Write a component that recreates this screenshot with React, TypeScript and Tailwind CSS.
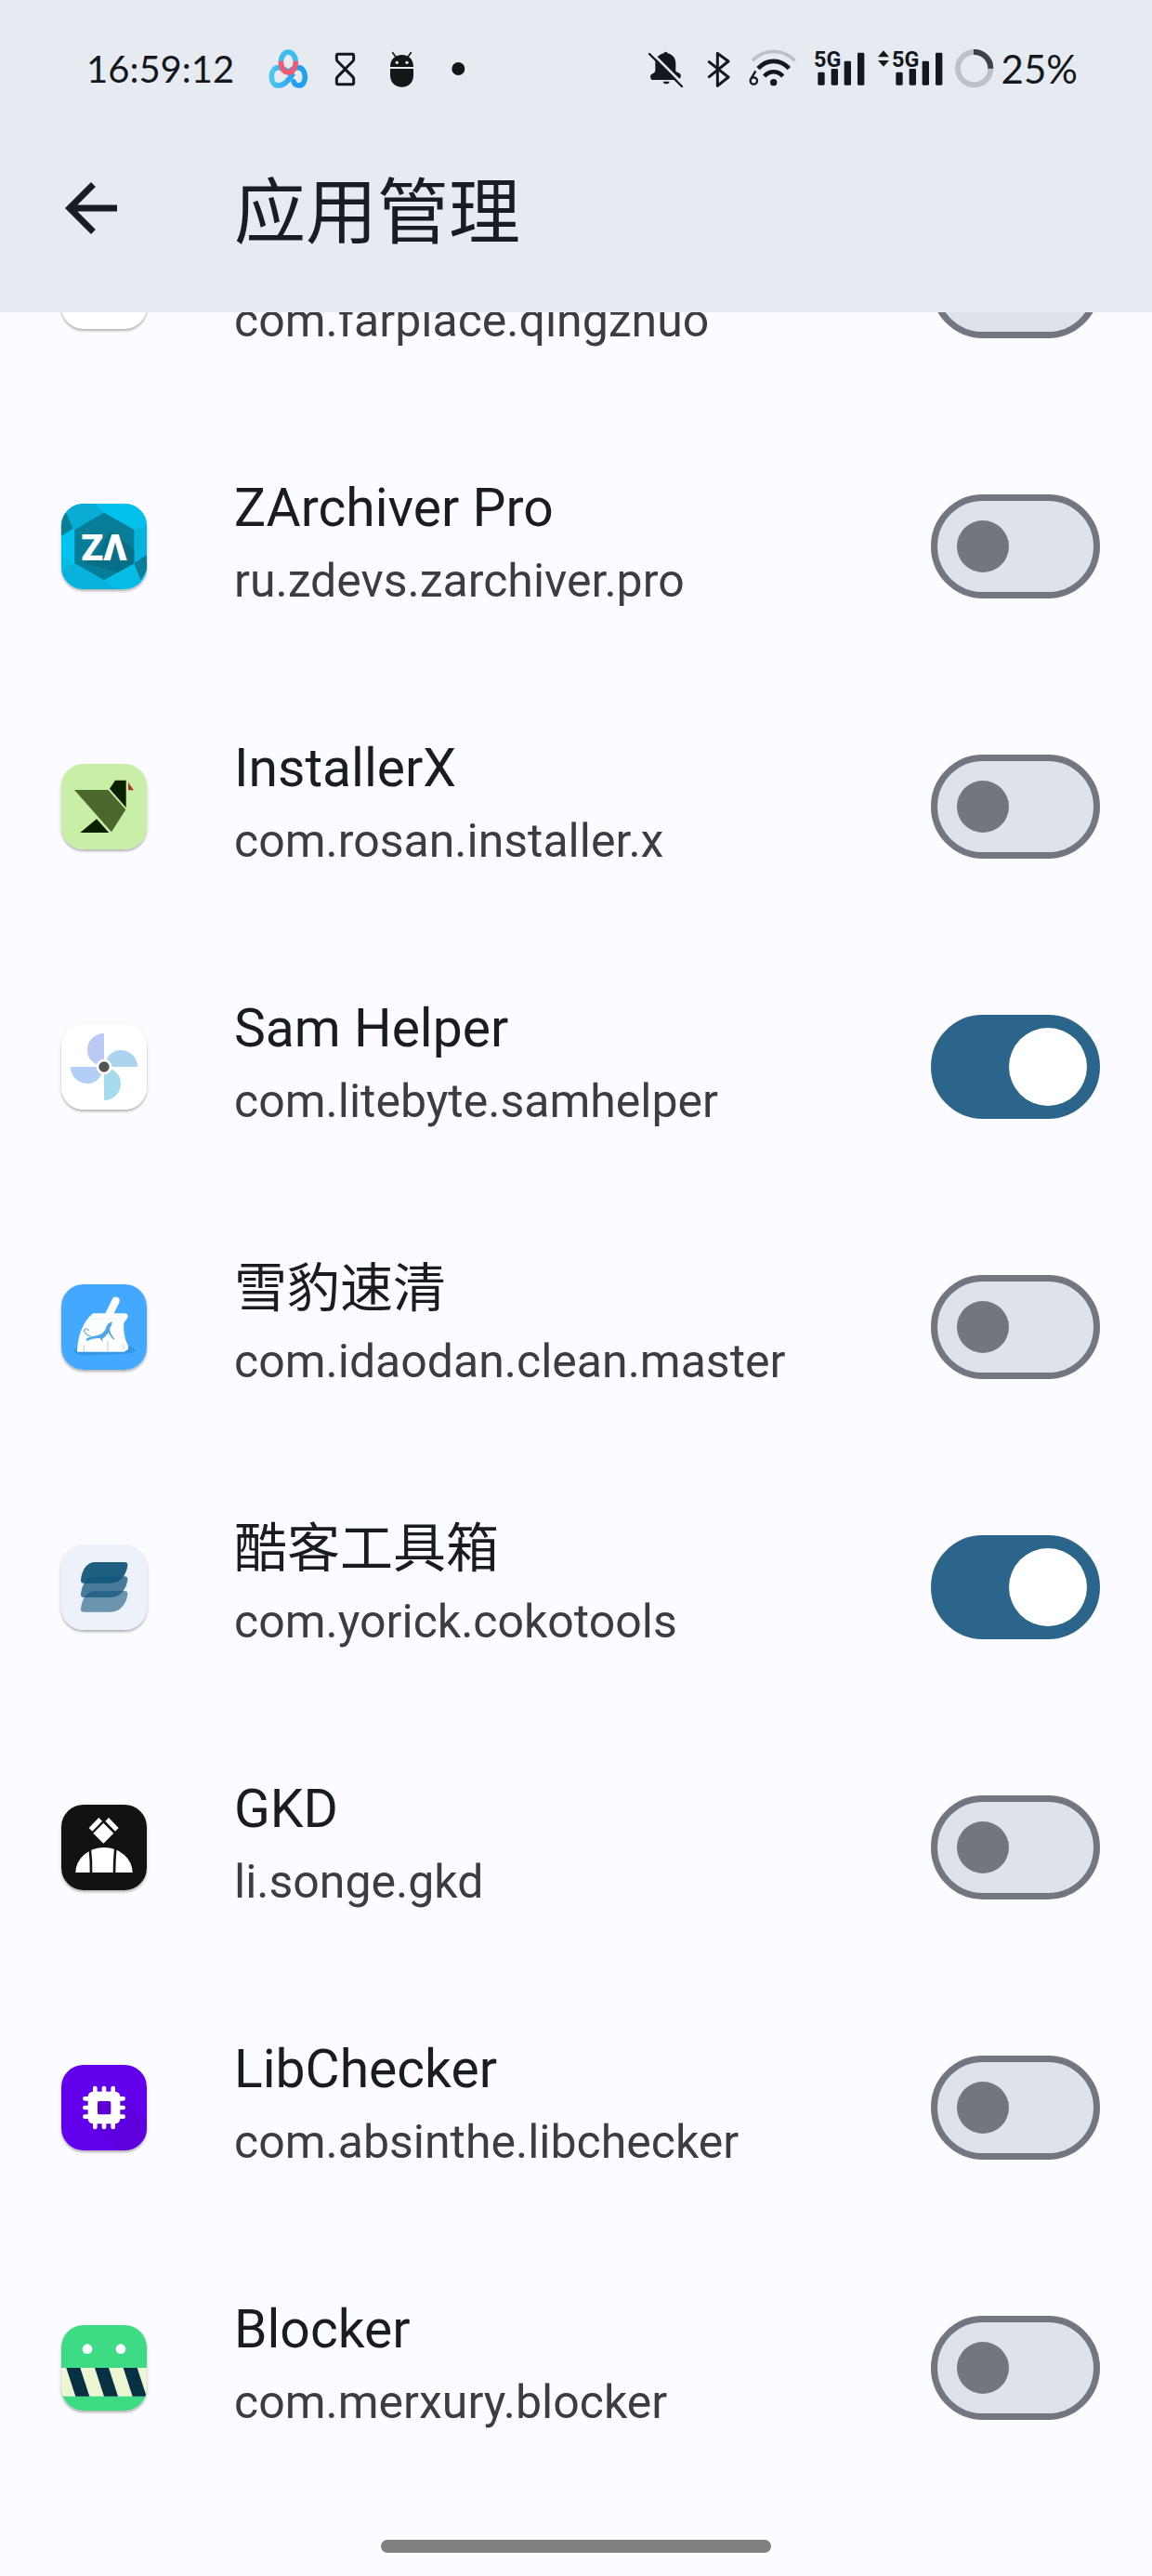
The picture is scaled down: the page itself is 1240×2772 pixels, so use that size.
import { useState } from 'react';
import type { ReactNode } from 'react';

function CloudDiskIcon() {
  return (
    <svg viewBox="684 60 135 144" className="h-12 w-[45px]" fill="none" aria-hidden="true">
      <defs>
        <linearGradient id="loopTop" x1="0" y1="0" x2="0" y2="1">
          <stop offset="0.4" stopColor="#3dbdec" />
          <stop offset="0.48" stopColor="#ef5b74" />
        </linearGradient>
        <linearGradient id="loopLeft" x1="0" y1="0" x2="1" y2="0">
          <stop offset="0" stopColor="#4cc6ee" />
          <stop offset="1" stopColor="#2aa0ee" />
        </linearGradient>
      </defs>
      <path d="M768 146C754 162 743 186 718 186C704 186 697 172 697 158C697 141 706 128 720 128C731 128 738 134 751 143" stroke="url(#loopLeft)" strokeWidth="17" />
      <path d="M751 143C764 134 770 128 782 128C797 128 805 143 805 158C805 174 797 186 786 186C776 186 770 181 768 173" stroke="#22a0ef" strokeWidth="17" strokeLinecap="round" />
      <ellipse cx="751" cy="111" rx="24" ry="33" stroke="url(#loopTop)" strokeWidth="17" />
    </svg>
  );
}

function HourglassIcon() {
  return (
    <svg viewBox="867 60 135 144" className="h-12 w-[45px]" fill="none" stroke="#14171d" strokeWidth="9" strokeLinejoin="round" aria-hidden="true">
      <path d="M911 85H958Q962 85 962 90V101Q962 105 959 108L938 129Q935 133 938 137L959 158Q962 161 962 165V177Q962 182 958 182H911Q907 182 907 177V165Q907 161 910 158L931 137Q934 133 931 129L910 108Q907 105 907 101V90Q907 85 911 85Z" />
    </svg>
  );
}

function RobotIcon() {
  return (
    <svg viewBox="1050 60 135 144" className="h-12 w-[45px]" fill="#14171a" aria-hidden="true">
      <path d="M1080 126C1080 102 1096 87 1118 87C1140 87 1155 102 1155 126Z" />
      <path d="M1080 132H1155V153C1155 177 1139 191 1118 191C1096 191 1080 177 1080 153Z" />
      <path d="M1088 80L1098 94M1147 80L1137 94" stroke="#14171a" strokeWidth="5" strokeLinecap="round" />
      <circle cx="1102" cy="112" r="5" fill="#e6ebf2" />
      <circle cx="1134" cy="112" r="5" fill="#e6ebf2" />
    </svg>
  );
}

function DotIcon() {
  return (
    <svg viewBox="1232 60 135 144" className="h-12 w-[45px]" aria-hidden="true">
      <circle cx="1299" cy="132" r="21" fill="#14171a" />
    </svg>
  );
}

function MutedBellIcon() {
  return (
    <svg viewBox="36 60 144 144" className="size-12" fill="#14171d" aria-hidden="true">
      <path d="M104 82Q104 77 110 77Q115 77 115 82C132 86 142 98 142 114V140L156 148Q160 153 158 160L150 168H66Q60 166 60 157Q60 150 68 148Q76 144 76 138V114C76 98 87 86 104 82Z" />
      <path d="M101 173H122Q120 181 111 181Q103 181 101 173Z" />
      <path d="M64 80L170 186" stroke="#e6ebf2" strokeWidth="8" />
      <path d="M57 84L162 189" stroke="#14171d" strokeWidth="7" strokeLinecap="round" />
    </svg>
  );
}

function BluetoothIcon() {
  return (
    <svg viewBox="216 60 126 144" className="h-12 w-[42px]" fill="none" stroke="#14171d" strokeWidth="9" strokeLinejoin="round" strokeLinecap="round" aria-hidden="true">
      <path d="M250 110L312 159L277 187V82L312 108L250 158" />
    </svg>
  );
}

function WifiIcon() {
  return (
    <svg viewBox="378 60 168 144" className="h-12 w-14" fill="none" aria-hidden="true">
      <path d="M389 106C428 66 488 66 527 106" stroke="#bcc1c9" strokeWidth="11" />
      <path d="M408 131C437 100 480 100 508 131" stroke="#14171d" strokeWidth="14" />
      <path d="M428 156C446 137 470 137 488 156" stroke="#14171d" strokeWidth="14" />
      <circle cx="458" cy="176" r="11" fill="#14171d" />
      <path d="M400 139L386 163" stroke="#14171d" strokeWidth="7" />
      <circle cx="394" cy="171" r="11" stroke="#14171d" strokeWidth="7" />
    </svg>
  );
}

function Bars({ x }: { x: number }) {
  return (
    <g fill="#14171d">
      <text x={x - 13} y="125" fontSize="70" fontWeight="700" fontFamily="Roboto, sans-serif">5G</text>
      <rect x={x} y="143" width="22" height="42" rx="4" />
      <rect x={x + 43} y="132" width="22" height="53" rx="4" />
      <rect x={x + 85} y="107" width="22" height="78" rx="4" />
      <rect x={x + 128} y="80" width="22" height="105" rx="4" />
    </g>
  );
}

function SignalIcon() {
  return (
    <svg viewBox="582 60 174 144" className="h-12 w-[58px]" role="img" aria-label="5G">
      <Bars x={601} />
    </svg>
  );
}

function ActiveSignalIcon() {
  return (
    <svg viewBox="792 60 216 144" className="h-12 w-[72px]" role="img" aria-label="5G">
      <path d="M813 73L831 94H795ZM795 105H831L813 125Z" fill="#14171d" />
      <Bars x={853} />
    </svg>
  );
}

function BatteryRing() {
  return (
    <svg viewBox="1044 60 126 144" className="h-12 w-[42px]" fill="none" strokeWidth="18" aria-hidden="true">
      <circle cx="1106" cy="131" r="53" stroke="#bcc1ca" />
      <path d="M1104 78A53 53 0 0 1 1159 131" stroke="#3d4148" />
    </svg>
  );
}

function ArchiverLogo() {
  return (
    <svg viewBox="0 0 276 276" className="size-full" aria-hidden="true">
      <rect width="276" height="276" fill="#04bce6" />
      <path d="M0 0H110L138 29L43 84L14 30Z" fill="#08acd5" />
      <path d="M110 0H276V76L235 84L138 29Z" fill="#04c0ec" />
      <path d="M276 76V165L235 193V84Z" fill="#06b4dd" />
      <path d="M14 28L38 80L0 104V50Z" fill="#087e99" />
      <path d="M276 165V215L256 247L235 193Z" fill="#087e99" />
      <path d="M0 104L43 84V193L0 168Z" fill="#04c4ef" />
      <path d="M0 215L43 193L180 276H0Z" fill="#08b2db" />
      <path d="M138 29L235 84V193L138 247L43 193V84Z" fill="#087d98" />
      <path d="M160 86L235 150V193L184 221L76 194L120 150Z" fill="#076f87" />
      <text x="138" y="182" textAnchor="middle" fill="#fff" fontFamily="Roboto, sans-serif" fontWeight="900" fontSize="118">ZΛ</text>
    </svg>
  );
}

function BirdLogo() {
  return (
    <svg viewBox="48 66 276 276" className="size-full" aria-hidden="true">
      <rect x="48" y="66" width="276" height="276" fill="#c9eea6" />
      <path d="M90 150H199L256 214L210 286Z" fill="#4a672e" />
      <path d="M222 119H257V207L204 146Z" fill="#0b2000" />
      <path d="M162 244L202 288H109Z" fill="#0b2000" />
      <path d="M264 126L282 151H264Z" fill="#a5391c" />
    </svg>
  );
}

const BLADE = 'M186 204V100Q186 95 180 96C150 100 132 124 132 150C132 172 144 188 166 198Z';

function FanLogo() {
  return (
    <svg viewBox="48 66 276 276" className="size-full" aria-hidden="true">
      <rect x="48" y="66" width="276" height="276" fill="#fff" />
      <path d={BLADE} fill="#bbc9f5" />
      <path d={BLADE} fill="#abd4f1" transform="rotate(90 186 204)" />
      <path d={BLADE} fill="#a6daed" transform="rotate(180 186 204)" />
      <path d={BLADE} fill="#b3cff7" transform="rotate(270 186 204)" />
      <circle cx="186" cy="204" r="25" fill="#fff" />
      <circle cx="186" cy="204" r="17" fill="#545355" />
    </svg>
  );
}

function BroomLogo() {
  return (
    <svg viewBox="48 66 276 276" className="size-full" aria-hidden="true">
      <rect x="48" y="66" width="276" height="276" fill="#42a9fe" />
      <path d="M90 284Q92 268 108 268L262 264Q290 272 286 282Q282 290 262 290L130 296Q96 296 90 284Z" fill="#3597e6" />
      <path d="M224 119L202 164" stroke="#fff" strokeWidth="25" strokeLinecap="round" />
      <path d="M150 160H254Q266 162 262 174Q256 184 251 188C246 216 254 244 264 264V276L250 284H99C100 246 112 190 150 160Z" fill="#fdfeff" />
      <path d="M140 178H250" stroke="#f3e9e6" strokeWidth="2" />
      <path d="M121 262V284M198 250V286M246 262L252 276" stroke="#bfcbd6" strokeWidth="3" />
      <path d="M131 240C150 228 176 238 190 212Q196 190 212 187Q212 200 205 206C204 222 212 234 222 244Q214 248 200 222Q186 242 180 240L182 252L172 240Q152 238 132 248L128 248Z" fill="#4fa6e8" />
      <path d="M142 233C130 232 124 222 121 216Q124 206 136 214" fill="none" stroke="#7fb0d6" strokeWidth="4" strokeLinecap="round" />
    </svg>
  );
}

const LEAF = 'M154 123H252Q263 123 262 134C258 164 238 191 206 191H121Q110 191 111 180C114 150 130 124 154 123Z';

function LayersLogo() {
  return (
    <svg viewBox="48 66 276 276" className="size-full" fill="#14567b" aria-hidden="true">
      <rect x="48" y="66" width="276" height="276" fill="#edf1f9" />
      <path d={LEAF} opacity="0.6" transform="translate(0 93)" />
      <path d={LEAF} opacity="0.76" transform="translate(0 46)" />
      <path d={LEAF} opacity="0.95" />
    </svg>
  );
}

function FigureLogo() {
  return (
    <svg viewBox="48 66 276 276" className="size-full" fill="#fff" aria-hidden="true">
      <rect x="48" y="66" width="276" height="276" fill="#121212" />
      <path d="M184 125L217 158L184 191L151 158Z" />
      <path d="M137 141L169 108L180 119L148 152Z" />
      <path d="M233 141L201 108L190 119L222 152Z" />
      <path d="M94 285A92 81 0 0 1 278 285Z" />
      <path d="M140 206Q145 245 144 288M223 206Q219 245 219 288" fill="none" stroke="#121212" strokeWidth="8" />
    </svg>
  );
}

function ChipLogo() {
  return (
    <svg viewBox="48 66 276 276" className="size-full" aria-hidden="true">
      <rect x="48" y="66" width="276" height="276" fill="#6200ee" />
      <path d="M238 160L324 246V342H228L140 252Z" fill="#5b00d6" opacity="0.7" />
      <path d="M157 141V267M186 141V267M215 141V267M124 175H248M124 204H248M124 233H248" stroke="#fff" strokeWidth="14" strokeLinecap="round" />
      <rect x="134" y="152" width="104" height="104" rx="16" fill="#fff" />
      <rect x="165" y="183" width="43" height="43" rx="5" fill="#5b00d6" />
    </svg>
  );
}

function BarrierLogo() {
  return (
    <svg viewBox="48 66 276 276" className="size-full" aria-hidden="true">
      <rect x="48" y="66" width="276" height="276" fill="#3ddc84" />
      <circle cx="132" cy="143" r="16" fill="#fff" />
      <circle cx="240" cy="143" r="16" fill="#fff" />
      <rect x="48" y="204" width="276" height="92" fill="#edf6d2" />
      <path d="M64 204H109L139 296H94ZM156 204H201L231 296H186ZM248 204H293L323 296H278Z" fill="#073042" />
    </svg>
  );
}

type AppEntry = { name: string; pkg: string; enabled: boolean; logo: ReactNode };

const APPS: AppEntry[] = [
  { name: '', pkg: 'com.farplace.qingzhuo', enabled: false, logo: null },
  { name: 'ZArchiver Pro', pkg: 'ru.zdevs.zarchiver.pro', enabled: false, logo: <ArchiverLogo /> },
  { name: 'InstallerX', pkg: 'com.rosan.installer.x', enabled: false, logo: <BirdLogo /> },
  { name: 'Sam Helper', pkg: 'com.litebyte.samhelper', enabled: true, logo: <FanLogo /> },
  { name: '雪豹速清', pkg: 'com.idaodan.clean.master', enabled: false, logo: <BroomLogo /> },
  { name: '酷客工具箱', pkg: 'com.yorick.cokotools', enabled: true, logo: <LayersLogo /> },
  { name: 'GKD', pkg: 'li.songe.gkd', enabled: false, logo: <FigureLogo /> },
  { name: 'LibChecker', pkg: 'com.absinthe.libchecker', enabled: false, logo: <ChipLogo /> },
  { name: 'Blocker', pkg: 'com.merxury.blocker', enabled: false, logo: <BarrierLogo /> },
];

function AppRow({ app }: { app: AppEntry }) {
  const [on, setOn] = useState(app.enabled);
  return (
    <li>
      <label className="flex h-[280px] items-center pr-14 pl-[66px]">
        <span className="size-[92px] shrink-0 overflow-hidden rounded-[24px] bg-white shadow-[0_2px_3px_rgba(0,0,0,0.3)]">{app.logo}</span>
        <span className="ml-[94px] flex min-w-0 flex-1 flex-col pb-2.5">
          <span className="h-[84px] text-[57px] leading-[84px] text-[#191c20]">{app.name}</span>
          <span className="text-[50px] leading-[72px] text-[#3b3d42]">{app.pkg}</span>
        </span>
        <input
          type="checkbox"
          role="switch"
          checked={on}
          onChange={(e) => setOn(e.target.checked)}
          className="flex h-28 w-[182px] shrink-0 appearance-none items-center rounded-full border-[7px] border-[#72767e] bg-[#dde2eb] pl-[21px] before:block before:size-14 before:rounded-full before:bg-[#72767e] checked:border-[#2b658b] checked:bg-[#2b658b] checked:pl-[77px] checked:before:size-[84px] checked:before:bg-white"
        />
      </label>
    </li>
  );
}

export default function App() {
  return (
    <div className="flex min-h-screen flex-col bg-[#fcfbff] font-[Roboto,'Noto_Sans_CJK_SC',sans-serif]">
      <header className="relative z-10 bg-[#e6ebf2]">
        <div className="flex h-28 items-center justify-between pt-9 pr-20 pl-[93px] font-[Lato,sans-serif] text-[#14171d]">
          <div className="flex items-center gap-9">
            <time className="text-[40px]">16:59:12</time>
            <div className="flex items-center gap-4">
              <CloudDiskIcon />
              <HourglassIcon />
              <RobotIcon />
              <DotIcon />
            </div>
          </div>
          <div className="flex items-center gap-3">
            <MutedBellIcon />
            <BluetoothIcon />
            <WifiIcon />
            <SignalIcon />
            <ActiveSignalIcon />
            <div className="flex items-center gap-2">
              <BatteryRing />
              <span className="text-[42px]">25%</span>
            </div>
          </div>
        </div>
        <div className="flex h-56 items-center gap-28 pl-14">
          <button type="button" aria-label="返回" className="size-[84px]">
            <svg viewBox="0 0 24 24" className="size-full" fill="#191c24" aria-hidden="true">
              <path d="M20 11H7.83l5.59-5.59L12 4l-8 8 8 8 1.41-1.41L7.83 13H20v-2z" />
            </svg>
          </button>
          <h1 className="pt-3 text-[77px] leading-[98px] text-[#191c24]">应用管理</h1>
        </div>
      </header>
      <main className="-mt-[168px]">
        <ul>
          {APPS.map((app) => (
            <AppRow key={app.pkg} app={app} />
          ))}
        </ul>
      </main>
      <footer className="flex h-[84px] justify-center pt-[45px]">
        <div className="h-3.5 w-[420px] rounded-full bg-[#808080]" />
      </footer>
    </div>
  );
}
